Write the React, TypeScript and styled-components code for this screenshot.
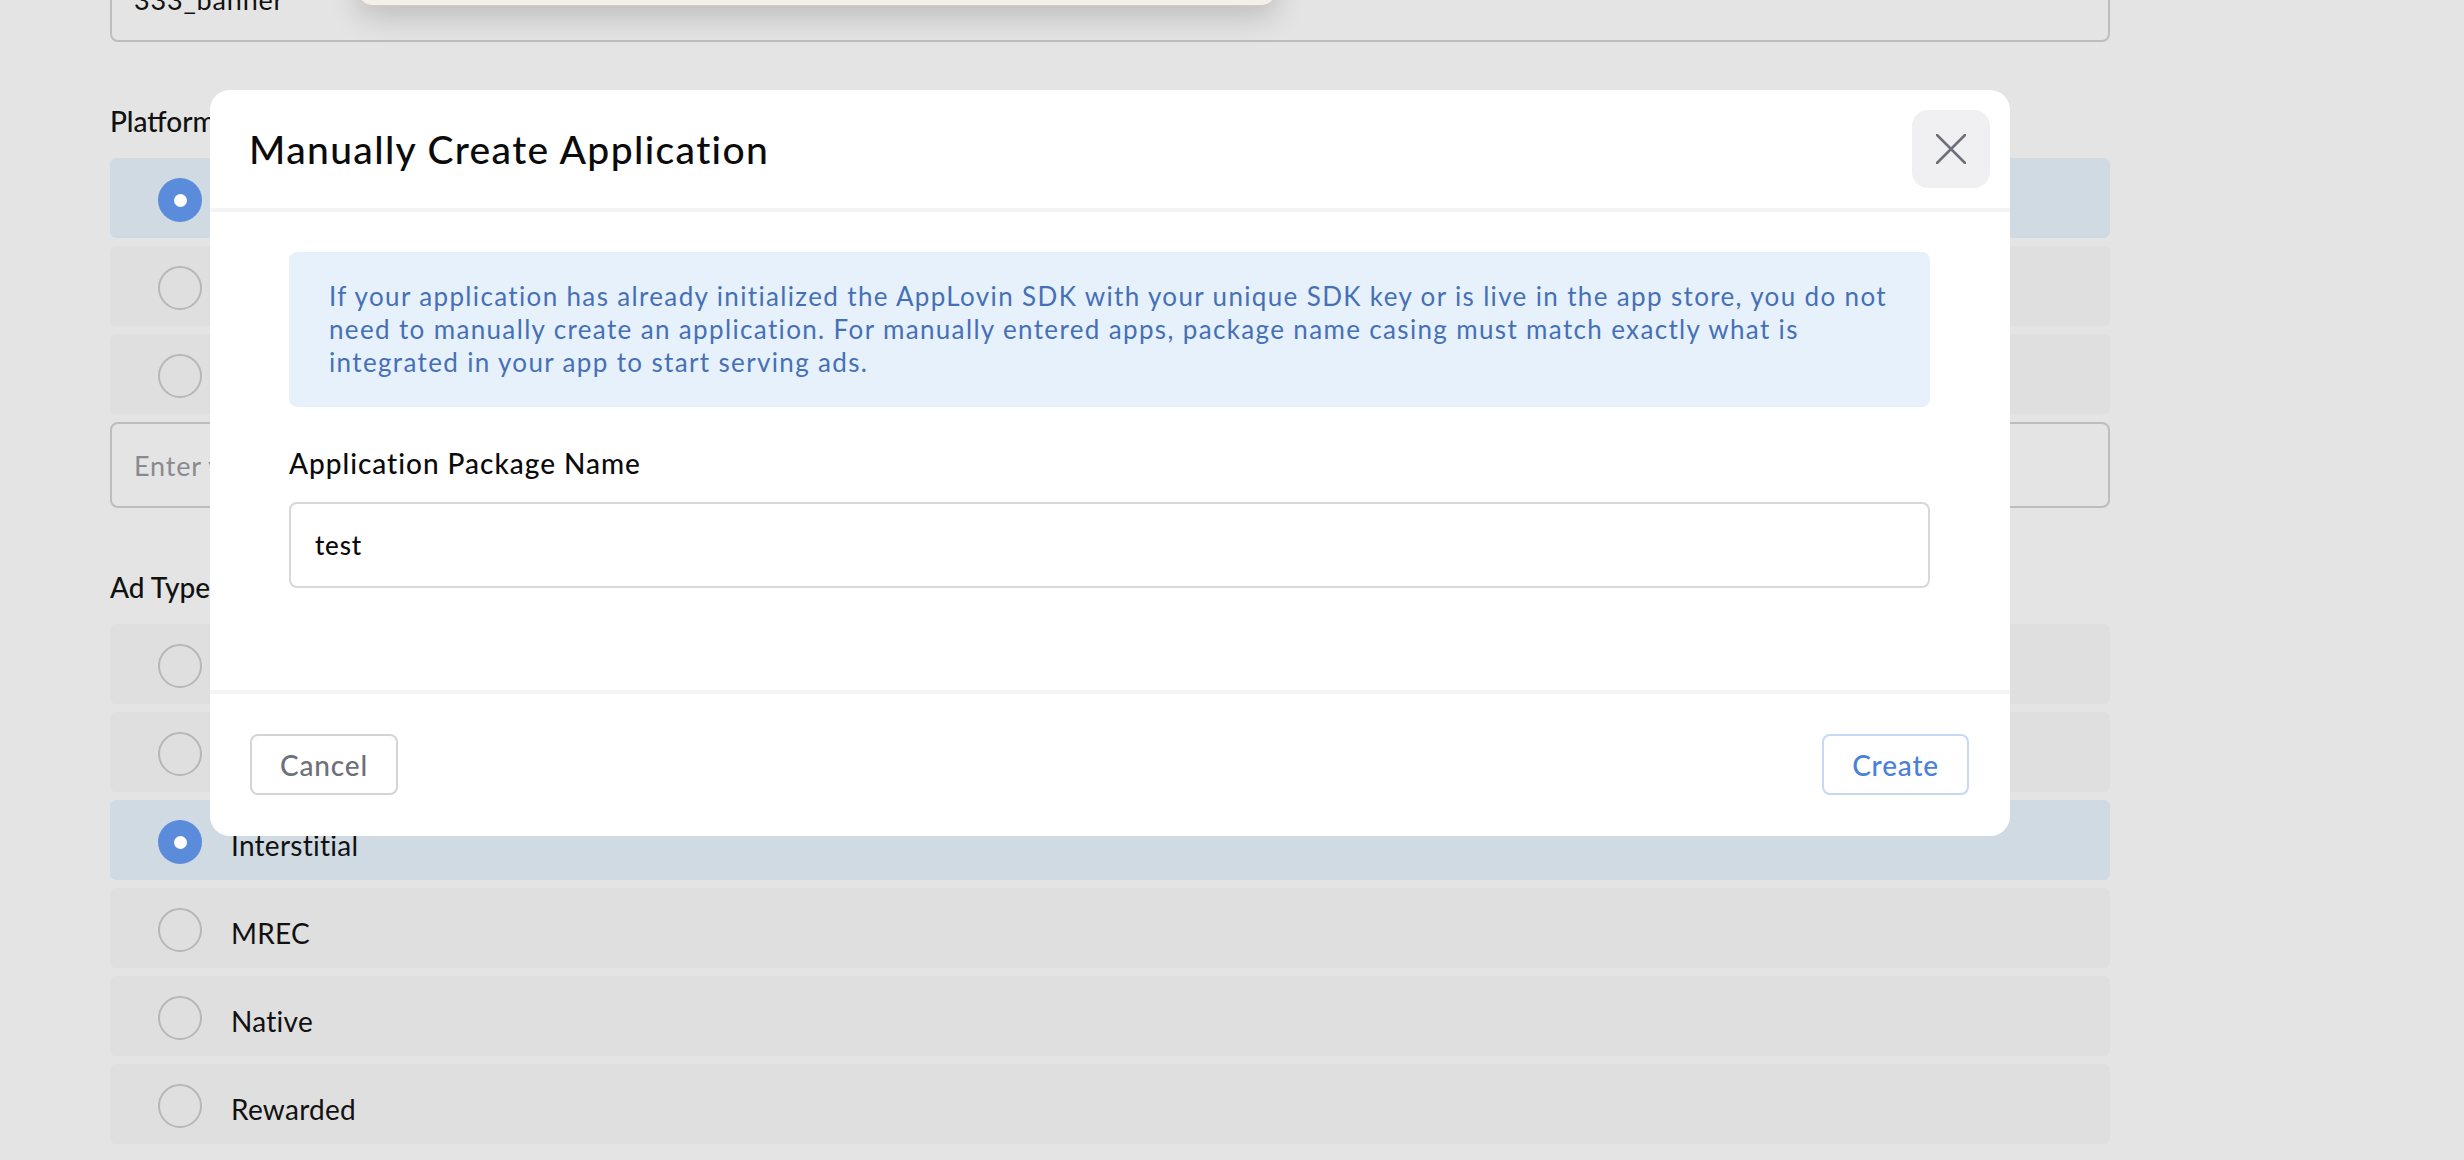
import React from "react";
import styled, { createGlobalStyle } from "styled-components";

const GlobalStyle = createGlobalStyle`
  html, body {
    margin: 0;
    padding: 0;
    background: #e4e4e4;
    font-family: "Lato", "Noto Sans", sans-serif;
    color: #111;
    overflow: hidden;
    height: 1160px;
  }
  * { box-sizing: border-box; }
`;

const Page = styled.div`
  position: relative;
  width: 2464px;
  height: 1160px;
  overflow: hidden;
  padding-left: 110px;
`;

const Form = styled.div`
  width: 2000px;
  display: flex;
  flex-direction: column;
`;

const TextField = styled.div<{ $placeholder?: boolean }>`
  height: 86px;
  border: 2px solid #bdbdbd;
  border-radius: 8px;
  display: flex;
  align-items: center;
  padding-left: 22px;
  font-size: 27px;
  letter-spacing: 0.03em;
  color: ${(p) => (p.$placeholder ? "#8a8a8e" : "#111")};
`;

const TopField = styled(TextField)`
  margin-top: -44px;
`;

const SectionLabel = styled.div`
  font-size: 28px;
  line-height: 36px;
  font-weight: 500;
  margin: 61px 0 19px;
`;

const OptionList = styled.div`
  display: flex;
  flex-direction: column;
  gap: 8px;
`;

const OptionRow = styled.div<{ $selected?: boolean }>`
  height: 80px;
  border-radius: 6px;
  background: ${(p) => (p.$selected ? "#d0dae3" : "#dfdfdf")};
  display: flex;
  align-items: center;
  padding-left: 48px;
  gap: 29px;
  font-size: 28px;
  letter-spacing: 0.01em;
`;

const OptionLabel = styled.span`
  margin-top: 10px;
`;

const Radio = styled.span<{ $checked?: boolean }>`
  width: 44px;
  height: 44px;
  margin-top: 4px;
  border-radius: 50%;
  flex: none;
  display: flex;
  align-items: center;
  justify-content: center;
  border: ${(p) => (p.$checked ? "none" : "2px solid #b7b7b7")};
  background: ${(p) => (p.$checked ? "#5b8bdb" : "transparent")};
  &::after {
    content: "";
    display: ${(p) => (p.$checked ? "block" : "none")};
    width: 13px;
    height: 13px;
    border-radius: 50%;
    background: #fff;
  }
`;

const PlatformInput = styled(TextField)`
  margin-top: 8px;
`;

const Dropdown = styled.div`
  position: absolute;
  left: 358px;
  top: -60px;
  width: 918px;
  height: 66px;
  background: #f5efe9;
  border: 1px solid #d6cbc0;
  border-radius: 14px;
  box-shadow: 0 10px 30px rgba(0, 0, 0, 0.18);
`;

const Modal = styled.div`
  position: absolute;
  left: 210px;
  top: 90px;
  width: 1800px;
  background: #fff;
  border-radius: 20px;
  display: flex;
  flex-direction: column;
  overflow: hidden;
`;

const ModalHeader = styled.div`
  display: flex;
  align-items: center;
  justify-content: space-between;
  padding: 20px 20px 20px 39px;
  border-bottom: 4px solid #f4f4f5;
`;

const Title = styled.h2`
  margin: 0;
  font-size: 39px;
  font-weight: 500;
  letter-spacing: 0.035em;
  color: #0b0b0b;
`;

const CloseButton = styled.button`
  width: 78px;
  height: 78px;
  border: none;
  border-radius: 16px;
  background: #f0f0f2;
  display: flex;
  align-items: center;
  justify-content: center;
  padding: 0;
  cursor: pointer;
`;

const ModalBody = styled.div`
  padding: 40px 80px 102px 79px;
  display: flex;
  flex-direction: column;
`;

const InfoBox = styled.div`
  background: #e7f1fc;
  border-radius: 8px;
  padding: 28px 40px;
  font-size: 26px;
  line-height: 33px;
  letter-spacing: 0.052em;
  color: #4670b6;
`;

const FieldLabel = styled.label`
  font-size: 28px;
  line-height: 36px;
  font-weight: 500;
  letter-spacing: 0.035em;
  color: #0b0b0b;
  margin: 38px 0 21px;
`;

const Input = styled.div`
  height: 86px;
  border: 2px solid #d8d8d8;
  border-radius: 8px;
  padding-left: 24px;
  display: flex;
  align-items: center;
  font-size: 26px;
  font-weight: 500;
  letter-spacing: 0.03em;
  color: #0b0b0b;
`;

const ModalFooter = styled.div`
  border-top: 4px solid #f4f4f5;
  padding: 40px 41px 41px 40px;
  display: flex;
  justify-content: space-between;
  align-items: center;
`;

const FooterButton = styled.button<{ $primary?: boolean }>`
  height: 61px;
  padding: 0 28px;
  border-radius: 8px;
  background: #fff;
  border: 2px solid ${(p) => (p.$primary ? "#c6d8f2" : "#d4d4d4")};
  color: ${(p) => (p.$primary ? "#4b80d8" : "#6d7079")};
  font-family: "Lato", "Noto Sans", sans-serif;
  font-size: 28px;
  font-weight: 500;
  letter-spacing: 0.03em;
  cursor: pointer;
`;

const platforms = [
  { label: "Android", selected: true },
  { label: "iOS", selected: false },
  { label: "Fire OS", selected: false },
];

const adTypes = [
  { label: "App Open", selected: false },
  { label: "Banner", selected: false },
  { label: "Interstitial", selected: true },
  { label: "MREC", selected: false },
  { label: "Native", selected: false },
  { label: "Rewarded", selected: false },
];

export default function App() {
  return (
    <>
      <GlobalStyle />
      <Page>
        <Form>
          <TopField>333_banner</TopField>
          <SectionLabel>Platform</SectionLabel>
          <OptionList>
            {platforms.map((p) => (
              <OptionRow key={p.label} $selected={p.selected}>
                <Radio $checked={p.selected} />
                <OptionLabel>{p.label}</OptionLabel>
              </OptionRow>
            ))}
          </OptionList>
          <PlatformInput $placeholder>Enter your package name</PlatformInput>
          <SectionLabel>Ad Type</SectionLabel>
          <OptionList>
            {adTypes.map((a) => (
              <OptionRow key={a.label} $selected={a.selected}>
                <Radio $checked={a.selected} />
                <OptionLabel>{a.label}</OptionLabel>
              </OptionRow>
            ))}
          </OptionList>
        </Form>
        <Dropdown />
        <Modal>
          <ModalHeader>
            <Title>Manually Create Application</Title>
            <CloseButton aria-label="Close">
              <svg width="30" height="30" viewBox="0 0 30 30" fill="none">
                <path d="M1 1L29 29M29 1L1 29" stroke="#6e7079" strokeWidth="2.6" strokeLinecap="round" />
              </svg>
            </CloseButton>
          </ModalHeader>
          <ModalBody>
            <InfoBox>
              If your application has already initialized the AppLovin SDK with your unique SDK key or is live in the
              app store, you do not need to manually create an application. For manually entered apps, package name
              casing must match exactly what is integrated in your app to start serving ads.
            </InfoBox>
            <FieldLabel>Application Package Name</FieldLabel>
            <Input>test</Input>
          </ModalBody>
          <ModalFooter>
            <FooterButton>Cancel</FooterButton>
            <FooterButton $primary>Create</FooterButton>
          </ModalFooter>
        </Modal>
      </Page>
    </>
  );
}
